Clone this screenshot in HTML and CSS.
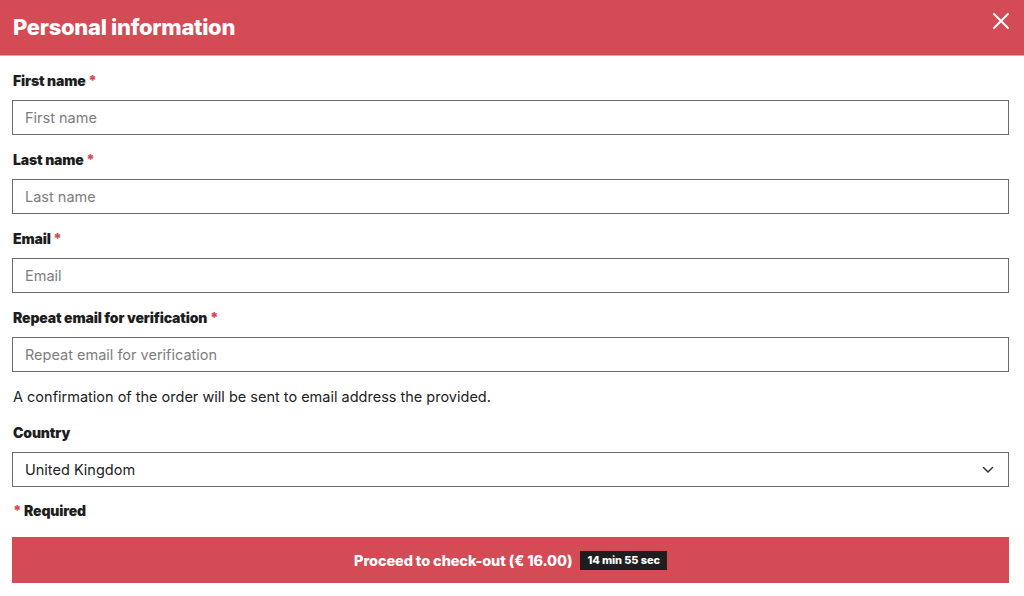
FILE: index.html
```html
<!DOCTYPE html>
<html lang="en">
<head>
<meta charset="utf-8">
<title>Personal information</title>
<link rel="stylesheet" href="styles.css">
</head>
<body>
<div class="modal">
  <header class="modal-header">
    <h1 class="modal-title">Personal information</h1>
    <button class="close-btn" aria-label="Close">
      <svg width="16" height="16" viewBox="0 0 16 16"><path d="M1 1L15 15M15 1L1 15" stroke="#fff" stroke-width="2" stroke-linecap="round"/></svg>
    </button>
  </header>
  <form class="form">
    <div class="field">
      <label class="label">First name <span class="req">*</span></label>
      <div class="input"><span class="placeholder">First name</span></div>
    </div>
    <div class="field">
      <label class="label">Last name <span class="req">*</span></label>
      <div class="input"><span class="placeholder">Last name</span></div>
    </div>
    <div class="field">
      <label class="label">Email <span class="req">*</span></label>
      <div class="input"><span class="placeholder">Email</span></div>
    </div>
    <div class="field">
      <label class="label">Repeat email for verification <span class="req">*</span></label>
      <div class="input"><span class="placeholder">Repeat email for verification</span></div>
    </div>
    <p class="note">A confirmation of the order will be sent to email address the provided.</p>
    <div class="field country">
      <label class="label">Country</label>
      <div class="input select"><span class="value">United Kingdom</span>
        <svg class="chevron" width="12" height="8" viewBox="0 0 12 8"><path d="M1.5 1.5L6 6L10.5 1.5" fill="none" stroke="#333" stroke-width="1.5" stroke-linecap="round" stroke-linejoin="round"/></svg>
      </div>
    </div>
    <p class="required"><span class="req">*</span> Required</p>
    <button type="button" class="submit">Proceed to check-out (€ 16.00) <span class="timer">14 min 55 sec</span></button>
  </form>
</div>
</body>
</html>
```
FILE: styles.css
```css
* { box-sizing: border-box; }
html, body { margin: 0; padding: 0; background: #fff; }
body { font-family: Inter, "Liberation Sans", sans-serif; color: #222; }
.modal { width: 1024px; }
.modal-header {
  height: 56px;
  background: #d44a55;
  display: flex;
  align-items: center;
  justify-content: space-between;
  padding: 0 13px 0 13px;
  border-bottom: 1px solid #e8a0a6;
}
.modal-title {
  margin: 0;
  color: #fff;
  font-size: 22px;
  font-weight: 800;
  letter-spacing: -0.3px;
  line-height: 26px;
  padding-bottom: 2px;
}
.close-btn {
  background: none;
  border: 0;
  padding: 0;
  width: 18px;
  height: 18px;
  display: flex;
  align-items: center;
  justify-content: center;
  margin-bottom: 14px;
  margin-right: 1px;
}
.form { padding: 15px 15px 0 12px; display: flex; flex-direction: column; }
.field { display: flex; flex-direction: column; margin-bottom: 15px; }
.label { font-size: 14px; font-weight: 900; line-height: 20px; margin: 0 0 9px 1px; color: #1e1e1e; letter-spacing: -0.15px; }
.req { color: #d44a55; }
.input {
  height: 35px;
  border: 1px solid #6b6b6b;
  display: flex;
  align-items: center;
  padding: 0 12px;
  font-size: 14.5px;
}
.placeholder { color: #7d7d7d; }
.value { color: #222; flex: 1; }
.chevron { margin-right: 2px; }
.note { margin: 0 0 16px 1px; font-size: 14.5px; line-height: 20px; color: #222; }
.country { margin-bottom: 14px; }
.required { margin: 0 0 16px 1px; font-size: 14px; font-weight: 900; line-height: 20px; color: #1e1e1e; letter-spacing: -0.15px; }
.submit {
  height: 46px;
  background: #d44a55;
  border: 0;
  color: #fff;
  font-family: inherit;
  font-size: 14.5px;
  font-weight: 800;
  letter-spacing: -0.1px;
  display: flex;
  align-items: center;
  justify-content: center;
  gap: 8px;
  padding: 0;
}
.timer {
  background: #1e1e1e;
  color: #fff;
  font-size: 11px;
  font-weight: 800;
  padding: 2px 7px;
  line-height: 15px;
  letter-spacing: -0.1px;
}
```
